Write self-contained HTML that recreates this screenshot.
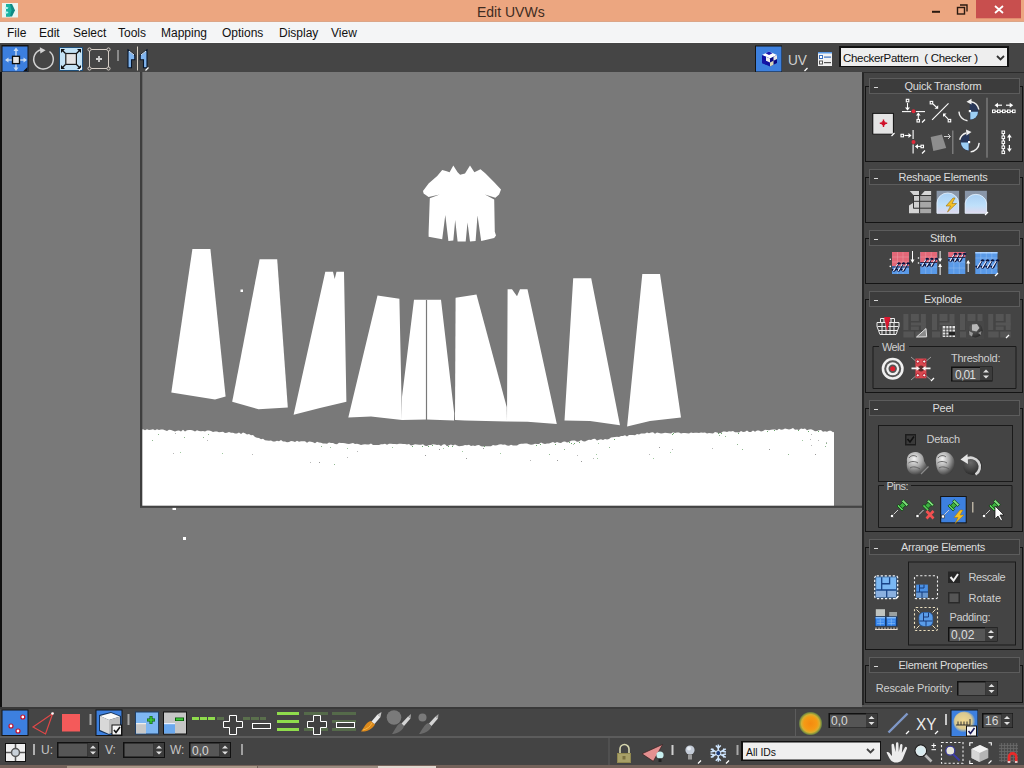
<!DOCTYPE html>
<html><head><meta charset="utf-8">
<style>
*{box-sizing:border-box;margin:0;padding:0}
html,body{width:1024px;height:768px;overflow:hidden;background:#444;font-family:"Liberation Sans",sans-serif}
.a{position:absolute}
#title{left:0;top:0;width:1024px;height:22px;background:#eca680}
#menu{left:0;top:22px;width:1024px;height:21px;background:#f4f5f6;font-size:12px;color:#111}
#menu span{position:absolute;top:4px}
#tb{left:0;top:43px;width:1024px;height:29px;background:#454545}
#canvas{left:0;top:72px;width:862px;height:635px;background:#797979}
#panel{left:862px;top:72px;width:162px;height:635px;background:#444}
#bt1{left:0;top:707px;width:1024px;height:29px;background:#454545;border-top:2px solid #393939}
#bt2{left:0;top:736px;width:1024px;height:29px;background:#444;border-top:2px solid #5c5c5c}
#strip{left:0;top:765px;width:1024px;height:3px;background:#74625a}
.bd{border:1px solid #141414}
.rh{width:151px;height:16px;border:1px solid #5c5c5c;background:#3c3c3c;color:#dcdcdc;font-size:11px;letter-spacing:-0.25px;text-align:center;line-height:14px;padding-right:3px}
.rh b{position:absolute;left:4px;top:7.5px;width:4px;height:1.5px;background:#d8d8d8}
</style></head><body>
<div id="title" class="a">
  <div class="a" style="left:0;top:21px;width:1024px;height:1px;background:#dca688"></div>
  <div class="a" style="left:477px;top:4px;font-size:14px;color:#3f2c22">Edit UVWs</div>
</div>
<div id="menu" class="a">
  <div class="a" style="left:0;top:20px;width:1024px;height:1px;background:#fbfbfb"></div>
  <span style="left:7px">File</span>
  <span style="left:39px">Edit</span>
  <span style="left:73px">Select</span>
  <span style="left:118px">Tools</span>
  <span style="left:161px">Mapping</span>
  <span style="left:222px">Options</span>
  <span style="left:279px">Display</span>
  <span style="left:331px">View</span>
</div>
<div id="tb" class="a"></div>
<div id="canvas" class="a"><svg class="a" style="left:0;top:0" width="862" height="635" viewBox="0 72 862 635">
<g fill="#fff">
<polygon points="192.4,249 210.4,249 225.6,396.6 215,399.4 171.3,392.4"/>
<polygon points="259.6,259.2 277.2,259.2 287.8,407.6 258.5,409.3 232.2,401.8"/>
<polygon points="325.3,271.7 333,271.7 334.7,279 336.5,271.7 344,271.7 346.4,401.8 320,408 293.6,414.7"/>
<polygon points="377.5,295.6 399.4,298.7 401.5,397.7 402,420 371,416.5 348.3,417.5"/>
<polygon points="414,299.8 441,299.8 454.2,413.3 454,420.5 426.5,419.6 402,420 402,396.7"/>
<polygon points="455.6,297.7 476.5,294.6 506.7,407 507,421.5 465,420.6 455,420"/>
<polygon points="507.6,289.3 512,289.3 517,296.3 520,289.3 527.5,289.3 556.8,424 527.5,421.7 507,421.5"/>
<polygon points="573.2,278.3 591.2,278.3 620,425.2 590,421 564.5,420.5"/>
<polygon points="642.3,274 660,274 681,417.5 650,421 627.1,426.4"/>
<polygon points="141,429.5 143,429.2 145,430.3 147,429.2 149,430.1 151,429.8 153,429.2 155,430.2 157,429.3 159,430.1 161,429.4 163,429.5 165,430.2 167,431 169,429.7 171,429.9 173,430.8 175,431.4 177,430.7 179,430.4 181,431.6 183,429.8 185,431.4 187,430.3 189,430.1 191,430.1 193,430.5 195,431.5 197,430.3 199,431.1 201,431.3 203,430.9 205,431.4 207,430.5 209,430.6 211,431 213,432 215,431.6 217,431.5 219,432.2 221,432 223,431.8 225,432.9 227,432.8 229,432 231,432.8 233,432.8 235,433.6 237,433.4 239,432.6 241,434.1 243,432.5 245,433.2 247,434.4 249,433.9 251,435.2 253,435 255,436.9 257,437.7 259,438 261,439.3 263,438.8 265,440.3 267,440.6 269,440.7 271,440.5 273,441.4 275,441.6 277,440.8 279,441.3 281,440.1 283,441.5 285,441.5 287,442.3 289,442 291,441 293,441.3 295,441.9 297,440.7 299,441.7 301,441.2 303,441.2 305,441.2 307,442.7 309,441.5 311,441.8 313,442.2 315,443.2 317,441.7 319,442.5 321,442.8 323,443.6 325,443.5 327,443.7 329,442.6 331,443 333,442.9 335,444.1 337,444.3 339,442.8 341,442.9 343,443.1 345,443.2 347,443.8 349,444.1 351,443.5 353,443 355,443.9 357,443.8 359,444.2 361,445.1 363,444.6 365,444.2 367,444.5 369,444.6 371,443.4 373,445.1 375,444.9 377,445.1 379,445 381,444.2 383,444.3 385,443.7 387,444.8 389,443.7 391,443.7 393,444 395,444 397,444.3 399,443.8 401,443.7 403,444.1 405,444 407,444.5 409,443.9 411,445.6 413,445.1 415,444.2 417,444.5 419,444.7 421,444.7 423,444.3 425,445.7 427,446.1 429,445 431,445.1 433,444.3 435,444.4 437,444.9 439,444.7 441,445.9 443,444.5 445,444.3 447,446.2 449,445.3 451,444.6 453,445.4 455,444.4 457,445.4 459,446.3 461,446.1 463,445.8 465,445 467,445.2 469,444.8 471,446 473,445.6 475,446.1 477,445.2 479,445 481,446.2 483,446.6 485,446.3 487,446.3 489,446.3 491,446.2 493,445.1 495,445.6 497,445.2 499,444.4 501,444.3 503,444.7 505,444.6 507,445.4 509,445.8 511,444.7 513,445.6 515,445.6 517,445.5 519,444.2 521,443.8 523,443.7 525,443.6 527,443.5 529,444.2 531,444.7 533,444.5 535,443.7 537,443.9 539,444.1 541,442.6 543,443.6 545,444 547,443.6 549,443.4 551,442.7 553,442 555,443.1 557,442 559,442.8 561,443 563,441.7 565,441.6 567,442.6 569,442 571,440.7 573,440.5 575,440.4 577,441.8 579,441.5 581,440 583,441.2 585,441.4 587,440.6 589,439.8 591,440.1 593,439.1 595,438.7 597,440.5 599,439.7 601,439.3 603,440 605,438.9 607,439.4 609,439 611,437.5 613,437.3 615,437.1 617,436.7 619,437 621,436.1 623,436.1 625,435.2 627,436.5 629,435 631,434.9 633,434.9 635,435.2 637,434 639,434.6 641,433.5 643,433.4 645,433.4 647,432.4 649,433.2 651,432.6 653,432.3 655,433.8 657,432.5 659,433.1 661,433.6 663,433.2 665,432.7 667,433.1 669,433.2 671,433.6 673,432.2 675,433.1 677,432.4 679,432.5 681,433.4 683,432.9 685,433 687,433.3 689,433.6 691,432.6 693,433 695,432.7 697,432.7 699,433 701,432.5 703,432.7 705,432.5 707,433.4 709,432.9 711,433.2 713,433.4 715,432 717,432.5 719,433.3 721,433 723,431.6 725,431.6 727,432.1 729,431.3 731,431.5 733,431.1 735,432.2 737,432.3 739,432.4 741,430.9 743,431.9 745,431.7 747,430.5 749,431.9 751,432 753,430.4 755,431.8 757,430.6 759,430.6 761,431.5 763,431.1 765,429.7 767,430.1 769,430.2 771,429.7 773,429.4 775,429.5 777,430.2 779,428.7 781,429.7 783,429.4 785,428.4 787,428.9 789,429.4 791,429.1 793,428.1 795,429.8 797,429.4 799,430 801,428.4 803,428.9 805,428.6 807,430.2 809,429.4 811,429.3 813,430 815,431.2 817,431.1 819,430.2 821,430.1 823,431.8 825,431.3 827,431.7 829,430.7 831,430.8 833,432.2 834,431.9 834,506 141,506"/>
<polygon points="423,190.9 428.6,183.5 437.2,176 442.2,169.9 445.9,171 449.6,172.3 453.3,165.5 457.6,172.3 460.1,174.8 465,173.6 470,165.5 474.4,172.3 480.5,169.2 485.5,173.6 494.2,182.2 501,189.6 499.1,194.6 495.4,197.7 484.9,194.6 494.2,199.6 494.8,231.7 496,235.4 494.2,237.9 481.2,241 477.5,215.6 475.6,241 470,241.6 467.5,222.4 465.7,241.6 457.6,241.6 455.2,220 453.3,240.4 448.4,241 445.3,215 442.2,239.2 428.6,236.7 428.6,232.4 429.8,198.3 439.7,194.6 428.6,197 423.6,193.4"/>
<rect x="240.5" y="289.5" width="2.5" height="2.5"/>
<rect x="183" y="537" width="3" height="3"/>
<rect x="172.5" y="507" width="3.5" height="3"/>
</g>
<rect x="439" y="449" width="1" height="1" fill="#9a9a9a"/>
<rect x="581" y="461" width="1" height="1" fill="#9a9a9a"/>
<rect x="564" y="449" width="1" height="1" fill="#8fb88f"/>
<rect x="737" y="444" width="1" height="1" fill="#8fb88f"/>
<rect x="826" y="443" width="1" height="1" fill="#8fb88f"/>
<rect x="573" y="444" width="1" height="1" fill="#b8b8b8"/>
<rect x="788" y="454" width="1" height="1" fill="#8fb88f"/>
<rect x="184" y="437" width="1" height="1" fill="#8fb88f"/>
<rect x="577" y="455" width="1" height="1" fill="#b8b8b8"/>
<rect x="347" y="457" width="1" height="1" fill="#b8b8b8"/>
<rect x="334" y="464" width="1" height="1" fill="#8fb88f"/>
<rect x="175" y="433" width="1" height="1" fill="#b8b8b8"/>
<rect x="500" y="453" width="1" height="1" fill="#a0c8a0"/>
<rect x="222" y="453" width="1" height="1" fill="#a0c8a0"/>
<rect x="596" y="454" width="1" height="1" fill="#a0c8a0"/>
<rect x="810" y="439" width="1" height="1" fill="#b8b8b8"/>
<rect x="818" y="440" width="1" height="1" fill="#b8b8b8"/>
<rect x="425" y="455" width="1" height="1" fill="#9a9a9a"/>
<rect x="719" y="435" width="1" height="1" fill="#8fb88f"/>
<rect x="443" y="448" width="1" height="1" fill="#a0c8a0"/>
<rect x="742" y="449" width="1" height="1" fill="#8fb88f"/>
<rect x="557" y="460" width="1" height="1" fill="#9a9a9a"/>
<rect x="462" y="451" width="1" height="1" fill="#a0c8a0"/>
<rect x="152" y="440" width="1" height="1" fill="#8fb88f"/>
<rect x="811" y="445" width="1" height="1" fill="#b8b8b8"/>
<rect x="173" y="453" width="1" height="1" fill="#b8b8b8"/>
<rect x="392" y="447" width="1" height="1" fill="#a0c8a0"/>
<rect x="207" y="440" width="1" height="1" fill="#b8b8b8"/>
<rect x="319" y="462" width="1" height="1" fill="#9a9a9a"/>
<rect x="330" y="447" width="1" height="1" fill="#a0c8a0"/>
<rect x="549" y="454" width="1" height="1" fill="#8fb88f"/>
<rect x="357" y="451" width="1" height="1" fill="#b8b8b8"/>
<rect x="597" y="458" width="1" height="1" fill="#a0c8a0"/>
<rect x="670" y="452" width="1" height="1" fill="#a0c8a0"/>
<rect x="252" y="454" width="1" height="1" fill="#b8b8b8"/>
<rect x="180" y="452" width="1" height="1" fill="#a0c8a0"/>
<rect x="649" y="454" width="1" height="1" fill="#b8b8b8"/>
<rect x="769" y="449" width="1" height="1" fill="#9a9a9a"/>
<rect x="712" y="448" width="1" height="1" fill="#b8b8b8"/>
<rect x="208" y="434" width="1" height="1" fill="#8fb88f"/>
<rect x="802" y="440" width="1" height="1" fill="#a0c8a0"/>
<rect x="530" y="460" width="1" height="1" fill="#b8b8b8"/>
<rect x="483" y="448" width="1" height="1" fill="#9a9a9a"/>
<rect x="659" y="447" width="1" height="1" fill="#9a9a9a"/>
<rect x="598" y="443" width="1" height="1" fill="#a0c8a0"/>
<rect x="321" y="446" width="1" height="1" fill="#8fb88f"/>
<rect x="310" y="462" width="1" height="1" fill="#b8b8b8"/>
<rect x="653" y="458" width="1" height="1" fill="#a0c8a0"/>
<rect x="725" y="436" width="1" height="1" fill="#8fb88f"/>
<rect x="672" y="449" width="1" height="1" fill="#b8b8b8"/>
<rect x="203" y="437" width="1" height="1" fill="#8fb88f"/>
<rect x="593" y="458" width="1" height="1" fill="#b8b8b8"/>
<rect x="158" y="434" width="1" height="1" fill="#8fb88f"/>
<rect x="811" y="434" width="1" height="1" fill="#b8b8b8"/>
<rect x="609" y="447" width="1" height="1" fill="#8fb88f"/>
<rect x="466" y="458" width="1" height="1" fill="#9a9a9a"/>
<rect x="825" y="446" width="1" height="1" fill="#8fb88f"/>
<rect x="815" y="454" width="1" height="1" fill="#9a9a9a"/>
<rect x="347" y="448" width="1" height="1" fill="#a0c8a0"/>
<rect x="826" y="442" width="1" height="1" fill="#b8b8b8"/>
<rect x="432" y="445" width="1" height="1" fill="#6aa86a"/>
<rect x="721" y="433" width="1" height="1" fill="#6aa86a"/>
<rect x="555" y="444" width="1" height="1" fill="#6aa86a"/>
<rect x="672" y="434" width="1" height="1" fill="#6aa86a"/>
<rect x="448" y="446" width="1" height="1" fill="#6aa86a"/>
<rect x="614" y="439" width="1" height="1" fill="#6aa86a"/>
<rect x="569" y="442" width="1" height="1" fill="#6aa86a"/>
<rect x="808" y="431" width="1" height="1" fill="#6aa86a"/>
<rect x="574" y="443" width="1" height="1" fill="#6aa86a"/>
<rect x="579" y="442" width="1" height="1" fill="#6aa86a"/>
<rect x="452" y="446" width="1" height="1" fill="#6aa86a"/>
<rect x="540" y="444" width="1" height="1" fill="#6aa86a"/>
<rect x="571" y="443" width="1" height="1" fill="#6aa86a"/>
<rect x="484" y="446" width="1" height="1" fill="#6aa86a"/>
<rect x="718" y="433" width="1" height="1" fill="#6aa86a"/>
<rect x="428" y="446" width="1" height="1" fill="#6aa86a"/>
<rect x="774" y="430" width="1" height="1" fill="#6aa86a"/>
<rect x="798" y="430" width="1" height="1" fill="#6aa86a"/>
<rect x="767" y="431" width="1" height="1" fill="#6aa86a"/>
<rect x="422" y="446" width="1" height="1" fill="#6aa86a"/>
<rect x="673" y="433" width="1" height="1" fill="#6aa86a"/>
<rect x="818" y="431" width="1" height="1" fill="#6aa86a"/>
<rect x="536" y="445" width="1" height="1" fill="#6aa86a"/>
<rect x="738" y="433" width="1" height="1" fill="#6aa86a"/>
<rect x="412" y="446" width="1" height="1" fill="#6aa86a"/>
<line x1="426.5" y1="300" x2="426.5" y2="420" stroke="#797979" stroke-width="1.2"/>
<rect x="140" y="72" width="2.3" height="435" fill="#3e3e3e"/>
<rect x="140" y="505.7" width="722" height="2.2" fill="#444"/>
<rect x="0" y="72" width="2" height="635" fill="#101010"/>
</svg></div>
<div id="panel" class="a"></div>
<div class="a" style="left:862px;top:72px;width:2px;height:635px;background:#262626"></div>
<div class="a" style="left:862px;top:72px;width:162px;height:1px;background:#2a2a2a"></div>
<div class="a bd" style="left:865px;top:86px;width:158px;height:76px"></div>
<div class="a rh" style="left:869px;top:78px"><b></b>Quick Transform</div>
<div class="a bd" style="left:865px;top:177px;width:158px;height:46px"></div>
<div class="a rh" style="left:869px;top:169px"><b></b>Reshape Elements</div>
<div class="a bd" style="left:865px;top:238px;width:158px;height:46px"></div>
<div class="a rh" style="left:869px;top:230px"><b></b>Stitch</div>
<div class="a bd" style="left:865px;top:299px;width:158px;height:94px"></div>
<div class="a rh" style="left:869px;top:291px"><b></b>Explode</div>
<div class="a bd" style="left:865px;top:408px;width:158px;height:124px"></div>
<div class="a rh" style="left:869px;top:400px"><b></b>Peel</div>
<div class="a bd" style="left:865px;top:547px;width:158px;height:103px"></div>
<div class="a rh" style="left:869px;top:539px"><b></b>Arrange Elements</div>
<div class="a bd" style="left:865px;top:665px;width:158px;height:38px"></div>
<div class="a" style="left:862px;top:705px;width:162px;height:2px;background:#575757"></div>
<div class="a rh" style="left:869px;top:657px"><b></b>Element Properties</div>
<div id="bt1" class="a"></div>
<div id="bt2" class="a"></div>
<div id="strip" class="a"></div>
<div class="a" style="left:67px;top:766px;width:190px;height:2px;background:#a89888"></div>
<div class="a" style="left:258px;top:766px;width:120px;height:2px;background:#9a8c80"></div>
<div class="a" style="left:378px;top:766px;width:58px;height:2px;background:#e0d8d0"></div>
<svg class="a" style="left:0;top:0" width="1024" height="768" id="ov">
<!-- title icon -->
<rect x="2" y="3" width="16" height="14.5" fill="#eaf6f2"/>
<polygon points="6,4 12,4 15,10.3 12,16.6 6,16.6" fill="#0f8a84"/>
<polygon points="6,4 10,4 11.5,10.3 10,16.6 6,16.6" fill="#19b3a2"/>
<polygon points="5,6.5 8.5,7.5 7.5,9 5,9" fill="#b8f4f0"/>
<polygon points="5,11.5 7.5,11.5 8.5,13 5,14" fill="#b8f4f0"/>
<!-- window controls -->
<rect x="932" y="10.8" width="8" height="2" fill="#2a1a10"/>
<rect x="957.5" y="7.5" width="7" height="6.5" fill="none" stroke="#2a1a10" stroke-width="1.4"/>
<path d="M960,5 H967 V11.5" fill="none" stroke="#2a1a10" stroke-width="1.4"/>
<rect x="976" y="0" width="45" height="18.3" fill="#c84f4e"/>
<path d="M995,6 L1003,13 M1003,6 L995,13" stroke="#fff" stroke-width="1.8"/>
<!-- move -->
<rect x="1.5" y="45" width="27" height="27" fill="#151515"/>
<rect x="2.5" y="46.5" width="25" height="25" fill="#3c7fdf"/>
<polygon points="23,71.5 27.5,71.5 27.5,67" fill="#111"/>
<g stroke="#c9dcf2" stroke-width="1.4" fill="#c9dcf2">
<line x1="16" y1="49" x2="16" y2="56"/><line x1="16" y1="64" x2="16" y2="70"/>
<line x1="6" y1="60" x2="12" y2="60"/><line x1="20" y1="60" x2="26" y2="60"/>
<polygon points="16,47.5 13.5,51 18.5,51" stroke="none"/>
<polygon points="16,71 13.5,67.5 18.5,67.5" stroke="none"/>
<polygon points="5,60 8.5,57.5 8.5,62.5" stroke="none"/>
<polygon points="27,60 23.5,57.5 23.5,62.5" stroke="none"/>
</g>
<rect x="12.5" y="56.3" width="7" height="7.3" fill="#e6e6e6" stroke="#0d0d0d" stroke-width="1.3"/>
<!-- rotate -->
<path d="M49.5,51.5 A9.8,9.8 0 1 1 41,49.8" fill="none" stroke="#d2d2d2" stroke-width="1.5"/>
<polygon points="39.8,47.2 45.6,50.2 40.4,53.6" fill="#d2d2d2"/>
<!-- scale -->
<rect x="59" y="47" width="24" height="24" fill="#1e4f7a"/>
<rect x="60" y="48" width="22" height="22" fill="#c3e2f5"/>
<rect x="65.8" y="53.5" width="10.6" height="10.9" fill="#e4e4e4" stroke="#1a1a1a" stroke-width="1.2"/>
<g stroke="#111" stroke-width="1.3" fill="#111">
<line x1="62" y1="50" x2="65.5" y2="53.5"/><line x1="80" y1="50" x2="76.5" y2="53.5"/>
<line x1="62" y1="68" x2="65.5" y2="64.5"/><line x1="80" y1="68" x2="76.5" y2="64.5"/>
<polygon points="61,49 65,49 61,53" stroke="none"/><polygon points="81,49 77,49 81,53" stroke="none"/>
<polygon points="61,69 65,69 61,65" stroke="none"/><polygon points="81,69 77,69 81,65" stroke="none"/>
</g>
<line x1="79" y1="70.5" x2="82" y2="67.5" stroke="#fff" stroke-width="1.2"/>
<!-- freeform -->
<rect x="89.5" y="49.5" width="19" height="19" fill="none" stroke="#d6cec6" stroke-width="1"/>
<g fill="#454545" stroke="#d6cec6" stroke-width="1"><circle cx="89.5" cy="49.5" r="1.6"/><circle cx="108.5" cy="49.5" r="1.6"/><circle cx="89.5" cy="68.5" r="1.6"/><circle cx="108.5" cy="68.5" r="1.6"/></g>
<path d="M99,56 V62 M96,59 H102" stroke="#d0d0d0" stroke-width="1.8"/>
<rect x="117" y="50" width="2" height="11" fill="#8a8a8a"/>
<!-- mirror -->
<g fill="#80b5f0" stroke="#08162a" stroke-width="1.1">
<polygon points="128,49.8 134.8,55.3 134.8,59.7 131.5,59.7 131.5,67.7 128,67.7"/>
<polygon points="147,49.8 140.2,55.3 140.2,59.7 143.5,59.7 143.5,67.7 147,67.7"/>
</g>
<line x1="129" y1="51" x2="134" y2="55" stroke="#e8f4ff" stroke-width="1"/><line x1="146" y1="51" x2="141" y2="55" stroke="#e8f4ff" stroke-width="1"/>
<line x1="137.5" y1="46.5" x2="137.5" y2="70.5" stroke="#d9d1c4" stroke-width="1"/>
<line x1="145.5" y1="70.5" x2="148.5" y2="67.5" stroke="#fff" stroke-width="1.2"/>
<!-- checker button -->
<rect x="755" y="45.5" width="27" height="26.5" fill="#151515"/>
<rect x="756" y="46.5" width="25.5" height="25" fill="#3d80de"/>
<g>
<polygon points="762,55 769,51.5 777,55 770,58.5" fill="#fff"/>
<polygon points="762,55 770,58.5 770,66.5 762,63" fill="#1010a0"/>
<polygon points="770,58.5 777,55 777,63 770,66.5" fill="#0a0a80"/>
<polygon points="765.5,53.3 769,51.5 772.5,53.2 769,55" fill="#1818b0"/>
<polygon points="766,56.7 770,58.5 770,62.5 766,60.8" fill="#f0f0f0"/>
<polygon points="762,59 766,60.8 766,64.8 762,63" fill="#1515a5"/>
<polygon points="773.5,56.8 777,55 777,59 773.5,60.8" fill="#e8e8e8"/>
<polygon points="770,62.5 773.5,60.8 773.5,64.8 770,66.5" fill="#d8d8b8"/>
</g>
<!-- UV -->
<text x="788" y="65" font-size="15" fill="#cfcfcf" font-family="Liberation Sans" textLength="19" lengthAdjust="spacingAndGlyphs">UV</text>
<line x1="804.5" y1="71" x2="807.5" y2="68" stroke="#fff" stroke-width="1.2"/>
<!-- list icon -->
<rect x="818" y="52" width="14" height="14" fill="#f2f2f2"/>
<rect x="818" y="52" width="14" height="1.5" fill="#5a9ae6"/>
<rect x="819.5" y="55.5" width="3" height="3" fill="#fff" stroke="#3a70c0" stroke-width="1"/>
<rect x="819.5" y="61" width="3" height="3" fill="#fff" stroke="#555" stroke-width="1"/>
<rect x="824" y="56.5" width="7" height="1.2" fill="#3a70c0"/>
<rect x="824" y="62" width="7" height="1.2" fill="#555"/>
<!-- dropdown -->
<rect x="839" y="46" width="170" height="21" fill="#121212"/>
<rect x="841" y="48" width="166" height="18" fill="#eeeeee"/>
<text x="843" y="61.5" font-size="11.5" fill="#111" font-family="Liberation Sans" textLength="135" lengthAdjust="spacing">CheckerPattern&#160;&#160;( Checker )</text>
<path d="M997,56 L1000.5,59.5 L1004,56" fill="none" stroke="#333" stroke-width="1.8"/>
</svg>
<svg class="a" style="left:0;top:0" width="1024" height="768" id="ovb">
<!-- vertex -->
<rect x="1.5" y="709.5" width="27" height="26.5" fill="#151515"/>
<rect x="2.5" y="710.5" width="25" height="24.5" fill="#3d80df"/>
<g fill="#fff" stroke="#c8102a" stroke-width="1.2"><circle cx="22.8" cy="717" r="2"/><circle cx="11" cy="726" r="2"/><circle cx="18" cy="731" r="2"/></g>
<!-- edge -->
<polygon points="33,727 52.7,713.5 45.5,734" fill="none" stroke="#e04848" stroke-width="1.2"/>
<circle cx="52.5" cy="713.5" r="1.3" fill="#fff"/>
<!-- face -->
<rect x="62" y="714" width="18" height="17.5" fill="#f45a5a"/>
<rect x="89.5" y="714" width="2" height="11" fill="#a8a8a8"/>
<!-- element -->
<rect x="95.5" y="709.5" width="27" height="26.5" fill="#151515"/>
<rect x="96.5" y="710.5" width="25" height="24.5" fill="#3d80df"/>
<polygon points="99,715 111,712 121,716 121,731 109,735 99,731" fill="#17345a"/>
<polygon points="100,716 111,713 120,716.5 109,720" fill="#fafafa"/>
<polygon points="100,716 109,720 109,734 100,730" fill="#d8d8d8"/>
<polygon points="109,720 120,716.5 120,730 109,734" fill="#bdbdbd"/>
<rect x="112" y="725" width="9.5" height="10" fill="#f4f4f4" stroke="#111" stroke-width="1"/>
<path d="M114,730 L116,732.5 L120,727" fill="none" stroke="#111" stroke-width="1.6"/>
<rect x="127.5" y="714" width="2" height="11" fill="#a8a8a8"/>
<!-- grow -->
<rect x="135" y="711.5" width="24" height="23" fill="#1f3f66"/>
<rect x="136" y="712.5" width="22" height="21" fill="#7eb6f2"/>
<rect x="136" y="724" width="10" height="9.5" fill="#c8c8c8"/>
<rect x="136" y="723" width="10" height="1.2" fill="#eee"/>
<path d="M151,716 V724 M147,720 H155" stroke="#0a5a0a" stroke-width="3"/>
<path d="M151,716.5 V723.5 M147.5,720 H154.5" stroke="#3ec83a" stroke-width="1.6"/>
<!-- shrink -->
<rect x="163" y="711.5" width="24" height="23" fill="#111"/>
<rect x="164" y="712.5" width="22" height="21" fill="#c6c6c6"/>
<rect x="164" y="724" width="11" height="9.5" fill="#6aa8ee"/>
<rect x="164" y="723" width="11" height="1.2" fill="#e8f0ff"/>
<rect x="175" y="717.5" width="9" height="3.5" fill="#0a5a0a"/>
<rect x="176" y="718.3" width="7" height="2" fill="#3ec83a"/>
<!-- loop/ring -->
<g fill="#8fdc4c"><rect x="192" y="717" width="7" height="3"/><rect x="200" y="717" width="7" height="3"/><rect x="208" y="717" width="7" height="3"/></g>
<g fill="#5a6f4c"><rect x="217" y="717" width="7" height="3"/><rect x="243" y="717" width="7" height="3"/><rect x="251" y="717" width="8" height="3"/><rect x="260" y="717" width="6" height="3"/></g>
<path d="M229.5,715.5 H236.5 V721.5 H242.5 V727.5 H236.5 V734.5 H229.5 V727.5 H223.5 V721.5 H229.5 Z" fill="#404040" stroke="#fff" stroke-width="1"/>
<rect x="252.5" y="723.5" width="18" height="5" fill="#404040" stroke="#fff" stroke-width="1"/>
<g fill="#8fdc4c"><rect x="277" y="712" width="22" height="3"/><rect x="277" y="720" width="22" height="3"/><rect x="277" y="728" width="22" height="3"/></g>
<g fill="#556a4a"><rect x="304" y="712" width="24" height="3"/><rect x="304" y="728" width="24" height="3"/><rect x="332" y="712" width="24" height="3"/><rect x="332" y="720" width="24" height="3"/><rect x="332" y="728" width="24" height="3"/></g>
<path d="M313.5,715.5 H320.5 V721.5 H326.5 V727.5 H320.5 V734.5 H313.5 V727.5 H307.5 V721.5 H313.5 Z" fill="#404040" stroke="#fff" stroke-width="1"/>
<rect x="336.5" y="722.5" width="18" height="5" fill="#404040" stroke="#fff" stroke-width="1"/>
<!-- brushes -->
<path d="M361,731.5 C365,732 371.5,730.5 375,724.5 L371,721 C366,722 364,728 361,731.5 Z" fill="#dc8a1c"/>
<path d="M363,730 C367,729 370,727 372,723" stroke="#f8b848" stroke-width="1" fill="none"/>
<path d="M371.5,721.5 L377.5,714.5 L380.5,717 L374.5,724 Z" fill="#e8e8e8"/>
<path d="M377.5,714.5 L381.5,712 L380.5,717 Z" fill="#c8c8c8"/>
<circle cx="394" cy="717.5" r="7.3" fill="#7a7a7a"/>
<path d="M392,734 C396,734 401.5,732 404,726.5 L401,723 C397,724 395,730 392,734 Z" fill="#6a6a6a"/>
<path d="M401.5,723.5 L408,716.5 L410.5,718.5 L404,726 Z" fill="#d4d4d4"/>
<path d="M408,716.5 L411,714 L410.5,718.5 Z" fill="#aaa"/>
<circle cx="422.5" cy="717.5" r="4" fill="#7a7a7a"/>
<path d="M419,734 C423,734 429,732 431.5,726.5 L428.5,723 C424.5,724 422,730 419,734 Z" fill="#6a6a6a"/>
<path d="M429,723.5 L435.5,716.5 L438,718.5 L431.5,726 Z" fill="#d4d4d4"/>
<path d="M435.5,716.5 L438.5,714 L438,718.5 Z" fill="#aaa"/>
<!-- right side toolbar1 -->
<rect x="795" y="709" width="1" height="27" fill="#5c5c5c"/>
<defs><radialGradient id="softsel"><stop offset="0" stop-color="#f48a10"/><stop offset="0.55" stop-color="#f59a14"/><stop offset="0.75" stop-color="#d8b030"/><stop offset="0.9" stop-color="#7a9040"/><stop offset="1" stop-color="#454545"/></radialGradient>
<radialGradient id="sun" cx="0.45" cy="0.45" r="0.55"><stop offset="0" stop-color="#f0d890"/><stop offset="0.7" stop-color="#d8c890"/><stop offset="1" stop-color="#3d80df"/></radialGradient></defs>
<circle cx="810.5" cy="723.5" r="12" fill="url(#softsel)"/>
<rect x="828.5" y="713" width="49" height="15" fill="#111"/>
<rect x="830" y="714.5" width="36" height="13" fill="#555"/>
<rect x="866" y="713.5" width="11" height="14" fill="#3c3c3c"/>
<text x="831" y="725" font-size="12" fill="#d8d8d8" font-family="Liberation Sans">0,0</text>
<g fill="#e0e0e0"><polygon points="871.5,716 868.5,719 874.5,719"/><polygon points="871.5,725 868.5,722 874.5,722"/></g>
<line x1="888.5" y1="732.5" x2="907.5" y2="713.5" stroke="#7f98c8" stroke-width="2.4"/>
<line x1="906" y1="734" x2="909" y2="731" stroke="#fff" stroke-width="1.2"/>
<text x="916" y="729.5" font-size="16" fill="#ececec" font-family="Liberation Sans" textLength="20.5" lengthAdjust="spacingAndGlyphs">XY</text>
<line x1="935" y1="734" x2="938" y2="731" stroke="#fff" stroke-width="1.2"/>
<rect x="945" y="714" width="2" height="11" fill="#c8c8c8"/>
<rect x="950.5" y="709.5" width="27.5" height="27" fill="#151515"/>
<rect x="951.5" y="710.5" width="26" height="25.5" fill="#3d80df"/>
<ellipse cx="964.5" cy="722" rx="11" ry="10.5" fill="url(#sun)"/>
<path d="M956,725 H970 M958,721.5 V725 M961,721.5 V725 M964,721.5 V725 M967,721.5 V725 M970,719 V725" stroke="#333" stroke-width="1"/>
<rect x="966.5" y="726" width="10" height="10" fill="#f4f4f4" stroke="#111" stroke-width="1"/>
<path d="M968.5,731 L970.5,733.5 L974.5,728" fill="none" stroke="#1a1a5a" stroke-width="1.6"/>
<rect x="982" y="713" width="31" height="15" fill="#111"/>
<rect x="983.5" y="714.5" width="18" height="13" fill="#555"/>
<rect x="1001.5" y="713.5" width="11" height="14" fill="#3c3c3c"/>
<text x="985" y="725" font-size="12" fill="#d8d8d8" font-family="Liberation Sans">16</text>
<g fill="#e0e0e0"><polygon points="1007,716 1004,719 1010,719"/><polygon points="1007,725 1004,722 1010,722"/></g>
<!-- toolbar 2 -->
<rect x="5" y="743" width="21" height="19" fill="#111"/>
<rect x="6" y="744" width="19" height="17" fill="#efefef"/>
<path d="M15.5,744 V761 M6,752.5 H25" stroke="#555" stroke-width="1.5"/>
<circle cx="15.5" cy="752.5" r="4" fill="#c8d0d8" stroke="#555" stroke-width="1.5"/>
<rect x="33" y="744" width="2" height="11" fill="#b0b0b0"/>
<text x="41" y="754" font-size="12" fill="#c4c4c4" font-family="Liberation Sans">U:</text>
<text x="105" y="754" font-size="12" fill="#c4c4c4" font-family="Liberation Sans">V:</text>
<text x="170" y="754" font-size="12" fill="#c4c4c4" font-family="Liberation Sans">W:</text>
<g>
<rect x="57" y="742" width="42" height="16" fill="#111"/><rect x="58.5" y="743.5" width="29" height="13" fill="#565656"/><rect x="87.5" y="743" width="10.5" height="14" fill="#3c3c3c"/>
<rect x="123" y="742" width="42" height="16" fill="#111"/><rect x="124.5" y="743.5" width="29" height="13" fill="#565656"/><rect x="153.5" y="743" width="10.5" height="14" fill="#3c3c3c"/>
<rect x="189" y="742" width="42" height="16" fill="#111"/><rect x="190.5" y="743.5" width="29" height="13" fill="#565656"/><rect x="219.5" y="743" width="10.5" height="14" fill="#3c3c3c"/>
</g>
<text x="192" y="754.5" font-size="12" fill="#d8d8d8" font-family="Liberation Sans">0,0</text>
<g fill="#e0e0e0">
<polygon points="93,745.5 90,748.5 96,748.5"/><polygon points="93,754.5 90,751.5 96,751.5"/>
<polygon points="159,745.5 156,748.5 162,748.5"/><polygon points="159,754.5 156,751.5 162,751.5"/>
<polygon points="225,745.5 222,748.5 228,748.5"/><polygon points="225,754.5 222,751.5 228,751.5"/>
</g>
<rect x="241" y="744" width="2" height="11" fill="#a0a0a0"/>
<rect x="608.5" y="738" width="1" height="27" fill="#5c5c5c"/>
<!-- lock -->
<path d="M620,754 V749 A4.5,4.5 0 0 1 629,749 V754" fill="none" stroke="#d8d8b0" stroke-width="1.6"/>
<rect x="617" y="753" width="14" height="10" fill="#908850"/>
<rect x="618" y="754" width="12" height="8" fill="#a8a068"/>
<rect x="622.5" y="756" width="3" height="3.5" fill="#7a7040"/>
<!-- red triangle light -->
<polygon points="642,753.8 662.6,744.4 653.3,761.3" fill="#e49090" stroke="#3a2020" stroke-width="0.7"/>
<circle cx="660" cy="755" r="3.6" fill="#c8f0f0"/>
<rect x="658.5" y="758.5" width="3" height="3.5" fill="#222"/>
<rect x="671.5" y="745" width="2" height="10" fill="#d0d0d0"/>
<circle cx="690" cy="750" r="4.6" fill="#c4ccd8"/>
<circle cx="689" cy="748.5" r="2" fill="#e8eef4"/>
<rect x="688" y="754.5" width="4" height="5" fill="#9a9a9a"/>
<line x1="698" y1="763.5" x2="701" y2="760.5" stroke="#fff" stroke-width="1.2"/>
<g stroke="#cfe6ff" stroke-width="1.5" fill="none">
<line x1="718.3" y1="744.5" x2="718.3" y2="761.7"/><line x1="710.8" y1="748.8" x2="725.8" y2="757.4"/><line x1="710.8" y1="757.4" x2="725.8" y2="748.8"/>
<path d="M715.8,745.5 L718.3,748 L720.8,745.5 M715.8,760.7 L718.3,758.2 L720.8,760.7 M710.5,752 L713.5,751.5 L712.5,748.5 M726,754 L723,754.5 L724,757.5 M710.5,754 L713.5,754.5 L712.5,757.5 M726,752 L723,751.5 L724,748.5"/>
</g>
<circle cx="718.3" cy="753.1" r="2.6" fill="#1c3c7a" stroke="#e0f0ff" stroke-width="1"/>
<line x1="726" y1="763.5" x2="729" y2="760.5" stroke="#fff" stroke-width="1.2"/>
<rect x="736.5" y="745" width="2" height="10" fill="#a8a8a8"/>
<rect x="741" y="741" width="140" height="20" fill="#111"/>
<rect x="743" y="742.5" width="137" height="17" fill="#efefef"/>
<text x="746" y="755.5" font-size="11.5" fill="#111" font-family="Liberation Sans" textLength="30" lengthAdjust="spacingAndGlyphs">All IDs</text>
<path d="M867,749 L870.5,752.5 L874,749" fill="none" stroke="#444" stroke-width="1.8"/>
<!-- hand -->
<path d="M886.5,752.5 C888,751.5 889.5,752.5 891,755 L892,756 L891.5,745 A1.2,1.2 0 0 1 894,744.8 L895.5,752 L896,743.5 A1.2,1.2 0 0 1 898.4,743.5 L898.8,752 L900.2,744.8 A1.2,1.2 0 0 1 902.5,745.3 L901.8,753 L904.8,747.5 A1.2,1.2 0 0 1 907,748.5 L903.5,757 C902.5,760 901,762.5 896,762.5 C892,762.5 890.5,760 889,757.5 Z" fill="#ececec"/>
<!-- zoom -->
<line x1="925" y1="755" x2="931.5" y2="761.5" stroke="#b8b8b8" stroke-width="2.6"/>
<circle cx="920.8" cy="750.7" r="5.8" fill="#d8ecf0" stroke="#222" stroke-width="1.2"/>
<circle cx="920.8" cy="750.7" r="4.6" fill="none" stroke="#e8e8e8" stroke-width="0.8"/>
<path d="M931.5,745.5 H936 M933.75,743.3 V747.8 M931.5,749.7 H936" stroke="#fff" stroke-width="1"/>
<rect x="941.5" y="742.5" width="21.5" height="20.8" fill="none" stroke="#eee" stroke-width="1.1" stroke-dasharray="2.2,2"/>
<line x1="953" y1="754" x2="959.5" y2="760.5" stroke="#3c3ca8" stroke-width="2"/>
<circle cx="950.3" cy="750.7" r="4.5" fill="#e4e4d8" stroke="#3a3a9a" stroke-width="1.3"/>
<!-- cube -->
<polygon points="971.5,749 980,745 988.3,749 988.3,758 979.5,762 971.5,758" fill="#b4b4b4"/>
<polygon points="971.5,749 980,745 988.3,749 979.5,753" fill="#f2f2f2"/>
<polygon points="971.5,749 979.5,753 979.5,762 971.5,758" fill="#d6d6d6"/>
<path d="M969.8,746 V742.7 H973 M988.5,742.7 H991.3 V745.5 M969.8,760.5 V763.5 H973 M988.5,763.5 L991.5,760.5" stroke="#fff" stroke-width="1.1" fill="none"/>
<!-- grid magnet -->
<rect x="999" y="743" width="19" height="19" fill="#4a4a4a"/>
<path d="M1001.5,743 V762 M1004.5,743 V762 M1007.5,743 V762 M1010.5,743 V762 M1013.5,743 V762 M1016.5,743 V762 M999,745.5 H1018 M999,748.5 H1018 M999,751.5 H1018 M999,754.5 H1018 M999,757.5 H1018 M999,760.5 H1018" stroke="#6a6a6a" stroke-width="0.8"/>
<path d="M1009,762.5 V757 A3.6,3.6 0 0 1 1016.2,757 V762.5" fill="none" stroke="#e82a2a" stroke-width="2.6"/>
<path d="M1007.7,762 H1010.3 M1014.9,762 H1017.5" stroke="#f0f0f0" stroke-width="1.5"/>
</svg>
<svg class="a" style="left:0;top:0" width="1024" height="768" id="ovp">
<!-- QUICK TRANSFORM -->
<rect x="872.3" y="112.9" width="21.5" height="21.5" fill="#111"/>
<rect x="873.3" y="113.9" width="19.6" height="19.8" fill="#e4e4e4"/>
<path d="M883.5,119.5 V127 M879.8,123.2 H887.2" stroke="#d0102a" stroke-width="1.4"/>
<circle cx="883.5" cy="123.2" r="1.6" fill="none" stroke="#d0102a" stroke-width="1.2"/>
<line x1="891.5" y1="136" x2="894.5" y2="133" stroke="#fff" stroke-width="1.2"/>
<g stroke="#fff" stroke-width="1.1" fill="none">
<rect x="906.3" y="99.3" width="2.5" height="2.5"/>
<line x1="907.5" y1="103" x2="907.5" y2="110"/>
<line x1="902" y1="111.6" x2="911" y2="111.6"/>
<line x1="916" y1="111.6" x2="925" y2="111.6"/>
<line x1="918.3" y1="113.5" x2="918.3" y2="119"/>
<rect x="917" y="119.5" width="2.5" height="2.5"/>
<rect x="901" y="134.3" width="2.5" height="2.5"/>
<line x1="904.5" y1="135.5" x2="911" y2="135.5"/>
<line x1="913.1" y1="130" x2="913.1" y2="139"/>
<line x1="913.1" y1="144.5" x2="913.1" y2="153.5"/>
<line x1="915.5" y1="146.4" x2="921" y2="146.4"/>
<rect x="921" y="145.2" width="2.5" height="2.5"/>
<rect x="930.2" y="101.4" width="2.5" height="2.5"/>
<line x1="933" y1="104" x2="937.5" y2="108.2"/>
<line x1="932.1" y1="119.8" x2="948.5" y2="103.4"/>
<line x1="943.8" y1="114.6" x2="948" y2="118.8"/>
<rect x="948.2" y="119.4" width="2.5" height="2.5"/>
</g>
<g fill="#fff">
<polygon points="905,107.5 910,107.5 907.5,110.5"/>
<polygon points="916,115.5 920.6,115.5 918.3,112.5"/>
<polygon points="908.5,133 908.5,138 911.5,135.5"/>
<polygon points="918,144 918,149 915,146.4"/>
<polygon points="934.5,108.8 938.2,108.8 938.2,105.2"/>
<polygon points="943,113.5 946.5,113.5 943,117"/>
</g>
<circle cx="913.5" cy="111.2" r="2" fill="#e02a3a"/>
<circle cx="913.5" cy="142.1" r="2" fill="#e02a3a"/>
<line x1="922" y1="122.5" x2="925" y2="119.5" stroke="#fff" stroke-width="1.2"/>
<line x1="922" y1="153.5" x2="925" y2="150.5" stroke="#fff" stroke-width="1.2"/>
<polygon points="930.7,137 941.9,134.4 946.2,148.1 933.3,151.1" fill="#8e8e8e"/>
<path d="M944,136.5 H950 M948,134 L950.5,136.5 L948,139" stroke="#ccc" stroke-width="1" fill="none"/>
<rect x="952" y="130.5" width="1.5" height="23.5" fill="#7a7a7a"/>
<rect x="986" y="97.7" width="2" height="60" fill="#6c6c6c"/>
<!-- rotate cw -->
<path d="M969.8,102.5 A8.7,8.7 0 0 1 969.8,119.9 Z" fill="#1c3263" opacity="0.7"/>
<path d="M970.3,111.7 H978 A7.8,7.8 0 0 1 970.3,119.5 Z" fill="#9ccff6"/>
<path d="M958.9,111.6 A9.6,9.6 0 0 0 967.5,120.7" fill="none" stroke="#f0f0f0" stroke-width="1.4"/>
<path d="M971,101.7 A9.6,9.6 0 0 1 978.8,109.5" fill="none" stroke="#f0f0f0" stroke-width="1.4"/>
<polygon points="966.5,101.8 971.5,98.8 971.5,104.5" fill="#f0f0f0"/>
<rect x="968.8" y="110" width="2.2" height="2.2" fill="#fff"/>
<!-- rotate ccw -->
<path d="M969.1,133.4 A8.7,8.7 0 0 0 969.1,150.8 Z" fill="#1c3263" opacity="0.7"/>
<path d="M968.6,142.6 H960.9 A7.8,7.8 0 0 0 968.6,150.4 Z" fill="#9ccff6"/>
<path d="M979.2,142.9 A9.6,9.6 0 0 1 970.6,151.9" fill="none" stroke="#f0f0f0" stroke-width="1.4"/>
<path d="M959.7,139.7 A9.6,9.6 0 0 1 966,133" fill="none" stroke="#f0f0f0" stroke-width="1.4"/>
<polygon points="971.5,132 966,129.5 966.5,135.5" fill="#f0f0f0"/>
<rect x="968" y="141" width="2.2" height="2.2" fill="#fff"/>
<!-- spacing -->
<g stroke="#fff" stroke-width="1.2" fill="none">
<line x1="997" y1="105.2" x2="1002" y2="105.2"/><line x1="1006" y1="105.2" x2="1011" y2="105.2"/>
<line x1="993" y1="111.3" x2="1014" y2="111.3"/>
<line x1="1003.3" y1="131.5" x2="1003.3" y2="151.6"/>
<line x1="1009.4" y1="136" x2="1009.4" y2="141"/><line x1="1009.4" y1="145" x2="1009.4" y2="150"/>
</g>
<g fill="#454545" stroke="#fff" stroke-width="1">
<rect x="992.5" y="110" width="2.6" height="2.6"/><rect x="997.5" y="110" width="2.6" height="2.6"/><rect x="1002.5" y="110" width="2.6" height="2.6"/><rect x="1007.5" y="110" width="2.6" height="2.6"/><rect x="1012.5" y="110" width="2.6" height="2.6"/>
<rect x="1002" y="131" width="2.6" height="2.6"/><rect x="1002" y="136" width="2.6" height="2.6"/><rect x="1002" y="141" width="2.6" height="2.6"/><rect x="1002" y="146" width="2.6" height="2.6"/><rect x="1002" y="151" width="2.6" height="2.6"/>
</g>
<g fill="#fff">
<polygon points="994.5,105.2 998,102.7 998,107.7"/><polygon points="1013.2,105.2 1009.7,102.7 1009.7,107.7"/>
<polygon points="1009.4,134 1007,137.5 1011.8,137.5"/><polygon points="1009.4,152 1007,148.5 1011.8,148.5"/>
</g>
<!-- RESHAPE -->
<polygon points="909.7,191 919,191 919,195 913.4,195" fill="#d6d6d6"/>
<polygon points="921,195 924.7,191 931.1,191 931.1,195" fill="#d6d6d6"/>
<rect x="913.7" y="195.5" width="5.5" height="13" fill="#d0d0d0"/>
<rect x="919.5" y="195.5" width="11.6" height="17.7" fill="#a6a6a6"/>
<polygon points="909,205.5 913,203 913.4,208.4 919.5,208.4 919.5,213.2 909,213.2" fill="#d4d4d4"/>
<path d="M919.6,191 V213.2 M913.5,195.5 H931.1 M913.5,201.3 H931.1 M913.5,208.2 H931.1 M913.5,196 V208.2" stroke="#333" stroke-width="1" fill="none"/>
<defs><linearGradient id="dome" x1="0" y1="0" x2="0" y2="1"><stop offset="0" stop-color="#a8d0f4"/><stop offset="0.6" stop-color="#bfe0fa"/><stop offset="1" stop-color="#e0d8ec"/></linearGradient></defs>
<rect x="936.6" y="190.8" width="22.5" height="22.5" fill="#8996a8"/>
<path d="M937,213.3 V203 A10.8,10 0 0 1 958.6,203 V213.3 Z" fill="url(#dome)" stroke="#e8f4ff" stroke-width="0.8"/>
<path d="M953,198 L946,206 H950.5 L947.5,212 L956.5,203.5 H952 L955,198 Z" fill="#f2c028" stroke="#9a7010" stroke-width="0.6"/>
<rect x="964.9" y="190.8" width="22" height="22.5" fill="#8996a8"/>
<path d="M965.2,213.3 V203 A10.8,10 0 0 1 986.6,203 V213.3 Z" fill="url(#dome)" stroke="#e8f4ff" stroke-width="0.8"/>
<line x1="985" y1="215" x2="988" y2="212" stroke="#fff" stroke-width="1.2"/>
<!-- STITCH -->
<g>
<rect x="892" y="252" width="17" height="22" fill="#5a9ae8"/><rect x="892" y="252" width="17" height="14" fill="#e36878"/>
<rect x="920.2" y="252" width="17" height="22" fill="#5a9ae8"/><rect x="920.2" y="252" width="17" height="10.5" fill="#e36878"/>
<rect x="948.3" y="252" width="17" height="22" fill="#5a9ae8"/><rect x="948.3" y="252" width="17" height="5" fill="#e36878"/>
<rect x="975.3" y="252" width="22.2" height="22" fill="#5a9ae8"/><rect x="975.3" y="252" width="22.2" height="1.5" fill="#a8d0ff"/>
</g>
<g stroke="#fff" stroke-width="0.5" opacity="0.35">
<path d="M892,257 H909 M892,262 H909 M892,269 H909 M897.5,252 V274 M903,252 V274"/>
<path d="M920.2,257 H937.2 M920.2,267 H937.2 M925.7,252 V274 M931.2,252 V274"/>
<path d="M948.3,262 H965.3 M948.3,268 H965.3 M953.8,252 V274 M959.3,252 V274"/>
<path d="M975.3,258 H997.5 M975.3,268 H997.5 M980.8,252 V274 M986.3,252 V274 M991.8,252 V274"/>
</g>
<g stroke="#0a1440" stroke-width="1.8" fill="none" stroke-linecap="round"><path d="M892.6,269.5 q1,2.5 2.5,0.5 l2.8,-6 q0.8,-1.5 2,-0.5 M897.2,269.5 q1,2.5 2.5,0.5 l2.8,-6 q0.8,-1.5 2,-0.5 M901.8,269.5 q1,2.5 2.5,0.5 l2.8,-6 q0.8,-1.5 2,-0.5 M920.8,265.0 q1,2.5 2.5,0.5 l2.8,-6 q0.8,-1.5 2,-0.5 M925.4,265.0 q1,2.5 2.5,0.5 l2.8,-6 q0.8,-1.5 2,-0.5 M930.0,265.0 q1,2.5 2.5,0.5 l2.8,-6 q0.8,-1.5 2,-0.5 M948.9,260.0 q1,2.5 2.5,0.5 l2.8,-6 q0.8,-1.5 2,-0.5 M953.5,260.0 q1,2.5 2.5,0.5 l2.8,-6 q0.8,-1.5 2,-0.5 M958.1,260.0 q1,2.5 2.5,0.5 l2.8,-6 q0.8,-1.5 2,-0.5 M976.2,266.5 q1,2.5 2.5,0.5 l2.8,-6 q0.8,-1.5 2,-0.5 M981.2,266.5 q1,2.5 2.5,0.5 l2.8,-6 q0.8,-1.5 2,-0.5 M986.2,266.5 q1,2.5 2.5,0.5 l2.8,-6 q0.8,-1.5 2,-0.5 M991.2,266.5 q1,2.5 2.5,0.5 l2.8,-6 q0.8,-1.5 2,-0.5"/></g>
<g stroke="#f4f4ff" stroke-width="1.1" fill="none"><path d="M893.4,271.0 l4.2,-7 M898.0,271.0 l4.2,-7 M902.6,271.0 l4.2,-7 M921.6,266.5 l4.2,-7 M926.2,266.5 l4.2,-7 M930.8,266.5 l4.2,-7 M949.7,261.5 l4.2,-7 M954.3,261.5 l4.2,-7 M958.9,261.5 l4.2,-7 M977.0,268.0 l4.2,-7 M982.0,268.0 l4.2,-7 M987.0,268.0 l4.2,-7 M992.0,268.0 l4.2,-7"/></g>
<path d="M892,267 H909 M920.2,262.5 H937.2 M948.3,257.5 H965.3" stroke="#1a1030" stroke-width="0.8"/>
<g stroke="#fff" stroke-width="1" fill="none"><path d="M912.5,251 V262 M940.1,251 V261 M940.1,264 V275 M968.2,261 V272"/></g>
<g fill="#fff"><circle cx="890.3" cy="259.3" r="0.8"/><circle cx="890.3" cy="266.4" r="0.8"/><circle cx="918.5" cy="258" r="0.8"/><circle cx="918.5" cy="263" r="0.8"/></g>

<g fill="#fff">
<polygon points="912.5,263 910.5,259.5 914.5,259.5"/>
<polygon points="940.1,262 938.1,258.5 942.1,258.5"/><polygon points="940.1,263.5 938.1,267 942.1,267"/>
<polygon points="968.2,260 966.2,263.5 970.2,263.5"/>
</g>
<line x1="995" y1="276" x2="998" y2="273" stroke="#fff" stroke-width="1.2"/>
<!-- EXPLODE -->
<g transform="translate(903.4,314)" fill="#555">
<rect x="0" y="0" width="5" height="16"/><rect x="7.5" y="0" width="8" height="7"/><rect x="17.5" y="0" width="5" height="16"/><rect x="7.5" y="8.5" width="15" height="3"/><rect x="7.5" y="12.5" width="8" height="3.5"/>
<rect x="0" y="17.5" width="10.5" height="6"/><rect x="12" y="17.5" width="10.5" height="6"/>
</g>
<g transform="translate(932.0,314)" fill="#555">
<rect x="0" y="0" width="5" height="16"/><rect x="7.5" y="0" width="8" height="7"/><rect x="17.5" y="0" width="5" height="16"/><rect x="7.5" y="8.5" width="15" height="3"/><rect x="7.5" y="12.5" width="8" height="3.5"/>
<rect x="0" y="17.5" width="10.5" height="6"/><rect x="12" y="17.5" width="10.5" height="6"/>
</g>
<g transform="translate(960.0,314)" fill="#555">
<rect x="0" y="0" width="5" height="16"/><rect x="7.5" y="0" width="8" height="7"/><rect x="17.5" y="0" width="5" height="16"/><rect x="7.5" y="8.5" width="15" height="3"/><rect x="7.5" y="12.5" width="8" height="3.5"/>
<rect x="0" y="17.5" width="10.5" height="6"/><rect x="12" y="17.5" width="10.5" height="6"/>
</g>
<g transform="translate(988.2,314)" fill="#555">
<rect x="0" y="0" width="5" height="16"/><rect x="7.5" y="0" width="8" height="7"/><rect x="17.5" y="0" width="5" height="16"/><rect x="7.5" y="8.5" width="15" height="3"/><rect x="7.5" y="12.5" width="8" height="3.5"/>
<rect x="0" y="17.5" width="10.5" height="6"/><rect x="12" y="17.5" width="10.5" height="6"/>
</g>
<g fill="none" stroke="#ececec" stroke-width="1">
<path d="M880.5,322.5 V318.5 H894.5 V322.5"/>
<path d="M877,322.5 H899 V326.5 L897.5,330.5 L896,334.5 H880 L878.5,330.5 L877,326.5 Z"/>
<path d="M877.5,326.5 H898.5 M878.5,330.5 H897.5 M882,322.5 V334.5 M886,322.5 V334.5 M890,322.5 V334.5 M894,322.5 V334.5 M884,318.5 V322.5 M891,318.5 V322.5"/>
</g>
<polygon points="884,317 890.5,317 887.2,331" fill="#d81830"/>
<polygon points="916.5,337 926,328.5 926.7,336.8" fill="#8a8a8a" stroke="#e0e0e0" stroke-width="1"/>
<rect x="940" y="325" width="17" height="13" fill="#474747"/>
<rect x="942.7" y="326" width="12.3" height="11" fill="#e4e4e4"/>
<path d="M942.7,329 H955 M942.7,332 H955 M942.7,335 H955 M945.8,326 V337 M948.9,326 V337 M952,326 V337" stroke="#333" stroke-width="0.9"/>
<rect x="949" y="332" width="6" height="3" fill="#222"/>
<rect x="966" y="321" width="18" height="18" fill="#474747"/>
<circle cx="975.3" cy="330.2" r="7.3" fill="url(#darksph)"/>
<path d="M972,324.5 L977,324 L979.5,328 L976.5,331.5 L972,330.5 Z" fill="#b8b8b8"/>
<path d="M969,331 L973,333 L972,336.5 L969.5,335 Z" fill="#9a9a9a"/>
<path d="M978,333 L981.5,331 L981,335 Z" fill="#8a8a8a"/>
<line x1="1006" y1="338" x2="1009" y2="335" stroke="#fff" stroke-width="1.2"/>
<!-- weld box -->
<path d="M879,346.5 H873 V388.5 H1016 V346.5 H909" fill="none" stroke="#1a1a1a" stroke-width="1"/>
<circle cx="892.7" cy="368.8" r="11" fill="#f0f0f0"/>
<circle cx="892.7" cy="368.8" r="8.5" fill="#555"/>
<circle cx="892.7" cy="368.8" r="6.5" fill="#f0f0f0"/>
<circle cx="892.7" cy="368.8" r="4.2" fill="#555"/>
<circle cx="892.7" cy="368.8" r="2.5" fill="#e02030"/>
<path d="M911,357 L918,363 M931,357 L924,363 M911,380 L918,374 M931,380 L924,374" stroke="#9a9a9a" stroke-width="1"/>
<rect x="915.4" y="358.5" width="11" height="19.8" fill="#d84850"/>
<circle cx="921" cy="368.4" r="3" fill="#5a2a2a"/>
<g fill="#f0f0f0" stroke="#b01020" stroke-width="0.9"><circle cx="917.8" cy="361.5" r="1.6"/><circle cx="924.2" cy="361.5" r="1.6"/><circle cx="917.8" cy="375.3" r="1.6"/><circle cx="924.2" cy="375.3" r="1.6"/></g>
<path d="M911.5,368.4 H918 M930.5,368.4 H924" stroke="#f4f4f4" stroke-width="1.6"/>
<polygon points="920,368.4 916.5,366 916.5,370.8" fill="#f4f4f4"/>
<polygon points="922,368.4 925.5,366 925.5,370.8" fill="#f4f4f4"/>
<line x1="931" y1="381" x2="934" y2="378" stroke="#fff" stroke-width="1.2"/>
<rect x="951" y="366.5" width="41.5" height="15" fill="#111"/>
<rect x="952.5" y="368" width="27.5" height="12.5" fill="#565656"/>
<rect x="980" y="367" width="12" height="13.5" fill="#3c3c3c"/>
<g fill="#e0e0e0"><polygon points="986,369.5 983,372.5 989,372.5"/><polygon points="986,378.5 983,375.5 989,375.5"/></g>
<!-- PEEL -->
<rect x="878.5" y="425.5" width="134" height="56" fill="none" stroke="#1a1a1a" stroke-width="1"/>
<path d="M884,485.5 H878.5 V527.5 H1012 V485.5 H911" fill="none" stroke="#1a1a1a" stroke-width="1"/>
<rect x="905" y="434" width="11" height="11.5" fill="#1c1c1c"/>
<rect x="906.5" y="435.5" width="8.5" height="8.5" fill="#3a3a3a"/>
<path d="M907.5,439 L910,442 L914,436.5" fill="none" stroke="#111" stroke-width="1.6"/>
<defs>
<radialGradient id="clay" cx="0.35" cy="0.3" r="0.75"><stop offset="0" stop-color="#f4f4f4"/><stop offset="0.5" stop-color="#a8a8a8"/><stop offset="1" stop-color="#3a3a3a"/></radialGradient>
<radialGradient id="darksph" cx="0.4" cy="0.35" r="0.7"><stop offset="0" stop-color="#6a6a6a"/><stop offset="1" stop-color="#262626"/></radialGradient>
</defs>
<path d="M907,462 C906,455 911,451.5 916,452 C921,452.5 924,456 924,461 L928,468 L925,470 C923,474 918,475.5 913,474.5 C908,473 906,468 907,462 Z" fill="url(#clay)"/>
<path d="M909,458 C911,455 915,455 917,457 M908.5,463 C911,461 915,461 918,463 M910,468 C913,466 917,467 920,469" stroke="#5a5a5a" stroke-width="0.9" fill="none"/>
<path d="M921,474 L928.5,466.5" stroke="#8a8a8a" stroke-width="1.3"/>
<path d="M936,462 C935,455 940,451.5 945,452 C950,452.5 954.5,457 954.5,463 C954.5,470 950,475 944.5,475 C939,475 936,469 936,462 Z" fill="url(#clay)"/>
<path d="M938,458 C940,455 944,455 946,457 M937.5,463 C940,461 944,461 947,463 M939,468 C942,466 946,467 949,469" stroke="#5a5a5a" stroke-width="0.9" fill="none"/>
<circle cx="972.5" cy="465.5" r="9.5" fill="url(#darksph)"/>
<path d="M966,459 A8.5,8.5 0 1 1 975.5,474.5" fill="none" stroke="#d6d6d6" stroke-width="2.6"/>
<polygon points="960.5,459.5 967.5,454 968,464" fill="#e4e4e4"/>
<!-- pins -->
<rect x="940.2" y="496" width="26.5" height="27.3" fill="#151515"/>
<rect x="941.2" y="497" width="24.5" height="25.3" fill="#3d80df"/>
<g stroke="#d0d0d0" stroke-width="1"><line x1="893" y1="515" x2="898" y2="510"/><line x1="918.5" y1="515" x2="923.5" y2="510"/><line x1="944" y1="515" x2="949" y2="510"/><line x1="985" y1="515" x2="990" y2="510"/></g>
<g fill="#fff" stroke="#222" stroke-width="0.6"><rect x="890.5" y="514.5" width="3" height="3"/><rect x="916" y="514.5" width="3" height="3"/><rect x="941.5" y="515" width="3" height="3"/><rect x="982.5" y="514.5" width="3" height="3"/></g>
<g transform="translate(899.5,508.5) rotate(45)">
<rect x="-3.6" y="-9" width="7.2" height="2.6" fill="#7ee07a" stroke="#0c3a10" stroke-width="0.7"/>
<rect x="-2.2" y="-6.5" width="4.4" height="4.5" fill="#3cb040" stroke="#0c3a10" stroke-width="0.7"/>
<rect x="-3.6" y="-2.2" width="7.2" height="2.2" fill="#5ad05a" stroke="#0c3a10" stroke-width="0.7"/>
</g>
<g transform="translate(925,508.5) rotate(45)">
<rect x="-3.6" y="-9" width="7.2" height="2.6" fill="#7ee07a" stroke="#0c3a10" stroke-width="0.7"/>
<rect x="-2.2" y="-6.5" width="4.4" height="4.5" fill="#3cb040" stroke="#0c3a10" stroke-width="0.7"/>
<rect x="-3.6" y="-2.2" width="7.2" height="2.2" fill="#5ad05a" stroke="#0c3a10" stroke-width="0.7"/>
</g>
<g transform="translate(950.5,508.5) rotate(45)">
<rect x="-3.6" y="-9" width="7.2" height="2.6" fill="#7ee07a" stroke="#0c3a10" stroke-width="0.7"/>
<rect x="-2.2" y="-6.5" width="4.4" height="4.5" fill="#3cb040" stroke="#0c3a10" stroke-width="0.7"/>
<rect x="-3.6" y="-2.2" width="7.2" height="2.2" fill="#5ad05a" stroke="#0c3a10" stroke-width="0.7"/>
</g>
<g transform="translate(991.5,508.5) rotate(45)">
<rect x="-3.6" y="-9" width="7.2" height="2.6" fill="#7ee07a" stroke="#0c3a10" stroke-width="0.7"/>
<rect x="-2.2" y="-6.5" width="4.4" height="4.5" fill="#3cb040" stroke="#0c3a10" stroke-width="0.7"/>
<rect x="-3.6" y="-2.2" width="7.2" height="2.2" fill="#5ad05a" stroke="#0c3a10" stroke-width="0.7"/>
</g>
<path d="M926.5,511 L933.5,518.5 M933.5,511 L926.5,518.5" stroke="#f45050" stroke-width="2.6"/>
<path d="M960,510 L954,517.5 H958 L955,523.5 L964,515 H960 L963,510 Z" fill="#f4c020" stroke="#a07010" stroke-width="0.5"/>
<rect x="972" y="502" width="1.5" height="10.5" fill="#b8b0a0"/>
<path d="M995,506 V519 L998,516 L1001,521 L1002.5,520 L1000,515 H1004 Z" fill="#fff" stroke="#111" stroke-width="0.7"/>
<!-- ARRANGE -->
<rect x="908.5" y="562" width="107" height="83" fill="none" stroke="#1a1a1a" stroke-width="1"/>
<rect x="874.7" y="575.8" width="23" height="22.8" rx="2" fill="#3a5a80" stroke="#f4f4f4" stroke-width="1.2" stroke-dasharray="2.2,1.8"/>
<rect x="876.2" y="577.3" width="19.8" height="19.8" fill="#7ab8f4"/>
<rect x="876.2" y="590.5" width="19.8" height="6.6" fill="#8ab0e0"/>
<path d="M881.7,577.3 V590 M881.7,583.75 H889.6 V577.3 M876.2,590 H896 M886.7,590 V597" stroke="#1a4488" stroke-width="1.3" fill="none"/>
<line x1="895.5" y1="599" x2="898.5" y2="596" stroke="#fff" stroke-width="1.2"/>
<rect x="875.8" y="609.2" width="9.2" height="7" fill="#c0c4c0"/><rect x="889.2" y="612" width="7.8" height="4.5" fill="#9aa0a0"/>
<rect x="875" y="616.5" width="22.5" height="9.8" fill="#143a70"/>
<rect x="875.6" y="617" width="9.4" height="8.8" fill="#3a88ee"/><rect x="886.7" y="617" width="9.2" height="8.8" fill="#3a88ee"/>
<path d="M875.6,617.8 H885 M886.7,617.8 H895.9" stroke="#a8d4ff" stroke-width="1"/>
<path d="M877,621 H884 M877,623.5 H884 M888,621 H895 M888,623.5 H895 M880.3,619 V625.5 M891.3,619 V625.5" stroke="#8ac0f8" stroke-width="0.6"/>
<path d="M875,629.5 H897.5 M876,627.5 V629.5 M879,627.5 V629.5 M882,627.5 V629.5 M885,627.5 V629.5 M888,627.5 V629.5 M891,627.5 V629.5 M894,627.5 V629.5 M897,627.5 V629.5" stroke="#e8dcd0" stroke-width="1"/>
<rect x="914.5" y="575.8" width="23" height="22.8" rx="1.5" fill="none" stroke="#f0f0f0" stroke-width="1.1" stroke-dasharray="2.2,2"/>
<rect x="916.2" y="584.6" width="11.7" height="12.9" fill="#4a90e4"/>
<rect x="916.2" y="592.5" width="11.7" height="5" fill="#6a98d0"/>
<path d="M919.5,584.6 V592 M919.5,588 H924 V584.6 M916.2,592 H928 M922,592 V597.5" stroke="#153a7a" stroke-width="1" fill="none"/>
<rect x="914.5" y="607.5" width="23" height="23" rx="1.5" fill="none" stroke="#ece0c0" stroke-width="1.1" stroke-dasharray="2.2,2"/>
<path d="M916.5,609.5 l3,3 M935.5,609.5 l-3,3 M916.5,628.5 l3,-3 M935.5,628.5 l-3,-3" stroke="#ece0c0" stroke-width="1"/>
<rect x="918.6" y="612" width="14.6" height="14.6" rx="5" fill="#2a5a9a"/>
<rect x="919.3" y="612.7" width="13.2" height="13.2" rx="4.5" fill="#5a9ce8"/>
<path d="M923.5,612.7 V621 M923.5,617 H928.5 V612.7 M919.3,621 H932.5 M926,621 V625.9" stroke="#1a3a78" stroke-width="1" fill="none"/>
<rect x="948" y="571.5" width="12" height="11.5" fill="#262626"/>
<path d="M950.5,577 L953.5,580.5 L958,574" fill="none" stroke="#f0f0f0" stroke-width="2"/>
<rect x="948" y="592" width="12" height="11.5" fill="#2a2a2a"/>
<rect x="949.5" y="593.5" width="9" height="8.5" fill="#555"/>
<rect x="948" y="627" width="49.5" height="14.5" fill="#111"/>
<rect x="949.5" y="628.5" width="35.5" height="12.5" fill="#565656"/>
<rect x="985" y="627.5" width="12" height="13.5" fill="#3c3c3c"/>
<g fill="#e0e0e0"><polygon points="991,630 988,633 994,633"/><polygon points="991,639 988,636 994,636"/></g>
<!-- ELEMENT PROPS -->
<rect x="957" y="681" width="41" height="14.5" fill="#111"/>
<rect x="958.5" y="682.5" width="27" height="12.5" fill="#565656"/>
<rect x="985.5" y="681.5" width="12" height="13.5" fill="#3c3c3c"/>
<g fill="#e0e0e0"><polygon points="991.5,684 988.5,687 994.5,687"/><polygon points="991.5,693 988.5,690 994.5,690"/></g>
<g font-family="Liberation Sans" font-size="11" fill="#cfcfcf">
<text x="882" y="350.5" textLength="23">Weld</text>
<text x="951" y="362.2" textLength="49.5">Threshold:</text>
<text x="955" y="378.5" font-size="12" fill="#dedede" textLength="21">0,01</text>
<text x="926.5" y="443.2" textLength="33.5">Detach</text>
<text x="886.5" y="490" textLength="22">Pins:</text>
<text x="968.5" y="581.4" textLength="37">Rescale</text>
<text x="968.5" y="602.3" textLength="32.5">Rotate</text>
<text x="949.5" y="620.5" textLength="41">Padding:</text>
<text x="951" y="638.5" font-size="12" fill="#dedede" textLength="23.5">0,02</text>
<text x="875.8" y="691.8" textLength="77">Rescale Priority:</text>
</g>
</svg>
</body></html>
